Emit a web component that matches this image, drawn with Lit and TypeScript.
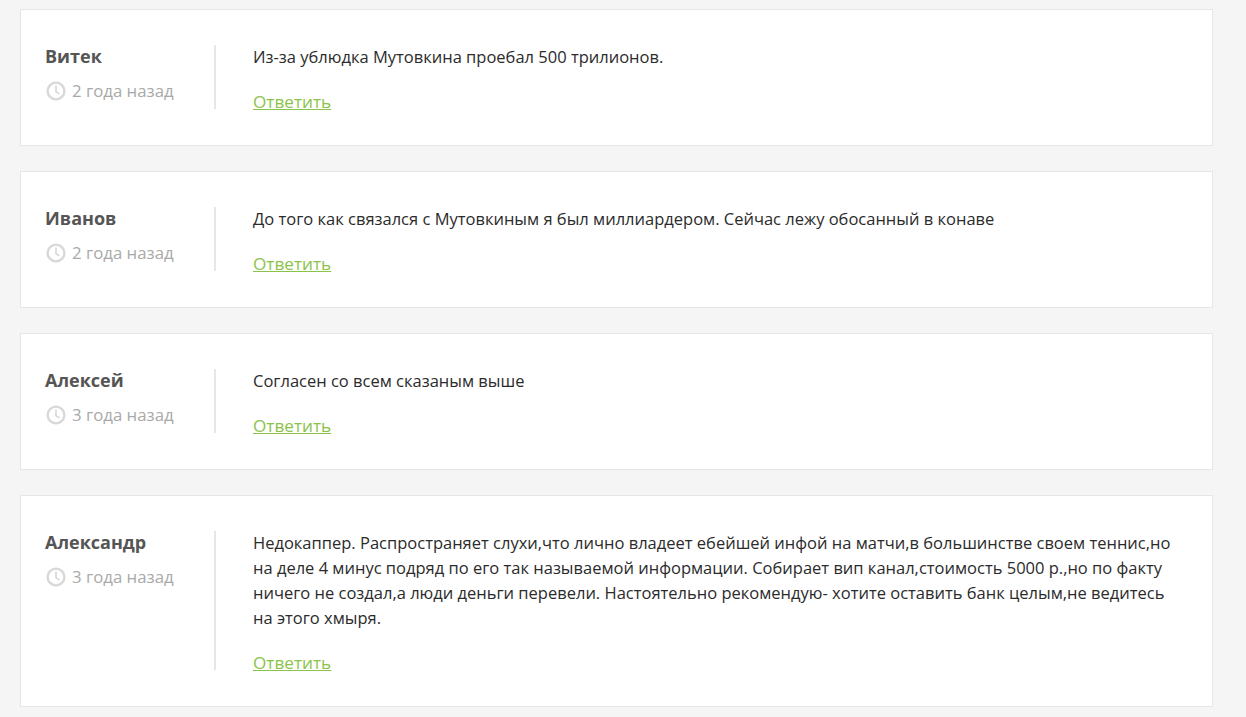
import { LitElement, html, css, svg } from 'lit'
import { customElement } from 'lit/decorators.js'

const comments = [
  { name: 'Витек', date: '2 года назад', text: 'Из-за ублюдка Мутовкина проебал 500 трилионов.' },
  { name: 'Иванов', date: '2 года назад', text: 'До того как связался с Мутовкиным я был миллиардером. Сейчас лежу обосанный в конаве' },
  { name: 'Алексей', date: '3 года назад', text: 'Согласен со всем сказаным выше' },
  {
    name: 'Александр',
    date: '3 года назад',
    text: 'Недокаппер. Распространяет слухи,что лично владеет ебейшей инфой на матчи,в большинстве своем теннис,но на деле 4 минус подряд по его так называемой информации. Собирает вип канал,стоимость 5000 р.,но по факту ничего не создал,а люди деньги перевели. Настоятельно рекомендую- хотите оставить банк целым,не ведитесь на этого хмыря.',
  },
]

const clock = svg`<circle cx="10" cy="10" r="8.4" fill="none" stroke="#d8d8d8" stroke-width="2.4"/><path d="M10 4.5V10.5L13.5 13" fill="none" stroke="#d4d4d4" stroke-width="1.5"/>`

@customElement('app-root')
export class AppRoot extends LitElement {
  static styles = css`
    :host {
      display: block;
      min-height: 717px;
      background: #f5f5f5;
      font-family: 'Open Sans', 'Noto Sans', sans-serif;
      box-sizing: border-box;
      padding: 9px 33px 10px 20px;
    }

    .list {
      display: flex;
      flex-direction: column;
      gap: 25px;
    }

    .card {
      display: flex;
      background: #fff;
      border: 1px solid #e6e6e6;
      padding: 35px 34px 36px 24px;
    }

    .meta {
      width: 169px;
      flex: none;
      border-right: 2px solid #e6e6e6;
    }

    .name {
      font-size: 18px;
      line-height: 23px;
      font-weight: 700;
      color: #555;
    }

    .date {
      display: flex;
      align-items: center;
      gap: 7px;
      margin-top: 10px;
      font-size: 16.8px;
      line-height: 25px;
      color: #a9a9a9;
    }

    .date svg {
      width: 20px;
      height: 20px;
      flex: none;
      margin-left: 1px;
      margin-right: -1px;
    }

    .body {
      flex: 1;
      padding-left: 37px;
    }

    .text {
      font-size: 16.5px;
      line-height: 25px;
      margin-top: -1px;
      padding-bottom: 1px;
      color: #2b2b2b;
    }

    .reply {
      display: block;
      margin-top: 25px;
      height: 14px;
      line-height: 14px;
      font-size: 17.2px;
      color: #8bc34a;
      text-decoration: underline;
      text-underline-offset: 1px;
      text-decoration-thickness: 1px;
    }
  `

  render() {
    return html`
      <div class="list">
        ${comments.map(
          (c) => html`
            <div class="card">
              <div class="meta">
                <div class="name">${c.name}</div>
                <div class="date">
                  <svg viewBox="0 0 20 20">${clock}</svg>
                  <span>${c.date}</span>
                </div>
              </div>
              <div class="body">
                <div class="text">${c.text}</div>
                <a class="reply">Ответить</a>
              </div>
            </div>
          `,
        )}
      </div>
    `
  }
}
